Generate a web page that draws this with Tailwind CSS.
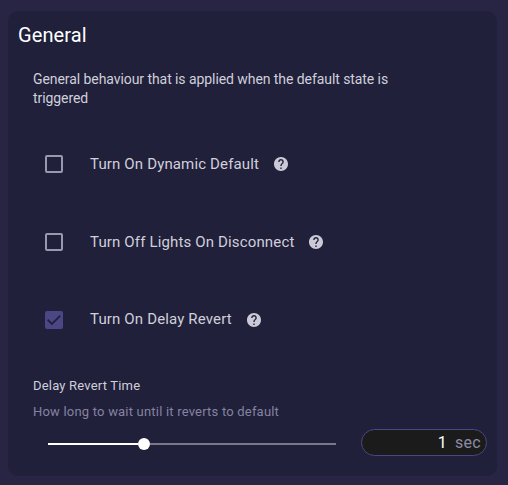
<!DOCTYPE html>
<html lang="en">
<head>
    <meta charset="UTF-8">
    <meta name="viewport" content="width=device-width, initial-scale=1.0">
    <title>General</title>
    <script src="https://cdn.jsdelivr.net/npm/@tailwindcss/browser@4"></script>
</head>
<body class="bg-[#272543] h-screen overflow-hidden font-['Roboto',sans-serif] text-[#d0cfdb]">
    <div class="ml-2 mt-[11px] w-[489px] h-[465px] rounded-[10px] bg-[#20203a] pt-2.5 pl-[10px] pr-[10px]">
        <h1 class="text-[20px] leading-[28px] tracking-[0.1px] text-white">General</h1>

        <div class="pl-[15px]">
            <p class="mt-[21px] w-[380px] text-[14px] leading-[19px] tracking-[-0.07px]">General behaviour that is applied when the default state is triggered</p>

            <!-- Options -->
            <div class="mt-[26px] flex flex-col">
                <div class="flex items-center h-[78px] pl-3 -mt-[9px]">
                    <span class="size-[18px] rounded-[2px] border-2 border-[#9b98ae]"></span>
                    <span class="ml-[27px] text-[15px] tracking-[0.15px]">Turn On Dynamic Default</span>
                    <svg class="ml-[14px] size-4" viewBox="0.6 0.6 22.8 22.8" fill="#cbc9d8"><path d="M12 2C6.48 2 2 6.48 2 12s4.480 10 10 10 10-4.480 10-10S17.520 2 12 2zm1 17h-2v-2h2v2zm2.070-7.750-.9.920C13.450 12.900 13 13.500 13 15h-2v-.5c0-1.100.45-2.100 1.170-2.830l1.240-1.260c.37-.36.59-.86.59-1.410 0-1.100-.9-2-2-2s-2 .9-2 2H8c0-2.210 1.790-4 4-4s4 1.790 4 4c0 .88-.36 1.680-.93 2.250z" stroke="none"/></svg>
                </div>
                <div class="flex items-center h-[78px] pl-3">
                    <span class="size-[18px] rounded-[2px] border-2 border-[#9b98ae]"></span>
                    <span class="ml-[27px] text-[15px] tracking-[0.15px]">Turn Off Lights On Disconnect</span>
                    <svg class="ml-[14px] size-4" viewBox="0.6 0.6 22.8 22.8" fill="#cbc9d8"><path d="M12 2C6.48 2 2 6.48 2 12s4.480 10 10 10 10-4.480 10-10S17.520 2 12 2zm1 17h-2v-2h2v2zm2.070-7.750-.9.920C13.450 12.900 13 13.500 13 15h-2v-.5c0-1.100.45-2.100 1.170-2.830l1.240-1.260c.37-.36.59-.86.59-1.410 0-1.100-.9-2-2-2s-2 .9-2 2H8c0-2.210 1.790-4 4-4s4 1.790 4 4c0 .88-.36 1.680-.93 2.250z" stroke="none"/></svg>
                </div>
                <div class="flex items-center h-[78px] pl-3">
                    <span class="size-[18px] rounded-[2px] bg-[#4a4784]">
                        <svg class="size-[18px]" viewBox="0 0 18 18" fill="none" stroke="#20203a" stroke-width="1.8"><path d="M2.600 8.700 6.900 13 15.300 4.600"/></svg>
                    </span>
                    <span class="ml-[27px] mb-0.5 text-[15px] tracking-[0.15px]">Turn On Delay Revert</span>
                    <svg class="ml-[14px] size-4" viewBox="0.6 0.6 22.8 22.8" fill="#cbc9d8"><path d="M12 2C6.48 2 2 6.48 2 12s4.480 10 10 10 10-4.480 10-10S17.520 2 12 2zm1 17h-2v-2h2v2zm2.070-7.750-.9.920C13.450 12.900 13 13.500 13 15h-2v-.5c0-1.100.45-2.100 1.170-2.830l1.240-1.260c.37-.36.59-.86.59-1.410 0-1.100-.9-2-2-2s-2 .9-2 2H8c0-2.210 1.790-4 4-4s4 1.790 4 4c0 .88-.36 1.680-.93 2.250z" stroke="none"/></svg>
                </div>
            </div>

            <!-- Delay slider -->
            <h2 class="mt-[17px] text-[13px] leading-5 tracking-[0.19px]">Delay Revert Time</h2>
            <p class="mt-1.5 text-[13px] leading-5 tracking-[0.2px] text-[#8583a0]">How long to wait until it reverts to default</p>
            <div class="mt-[7px] flex items-center">
                <div class="ml-[15px] mt-[3px] flex items-center w-[288px]">
                    <div class="h-0.5 w-[90px] bg-white"></div>
                    <div class="size-3 rounded-full bg-white"></div>
                    <div class="h-0.5 flex-1 bg-[#797889]"></div>
                </div>
                <div class="ml-[25px] flex items-center justify-end w-[126px] h-[27px] shrink-0 rounded-full border border-[#4a4784] bg-[#1b1b1b] pr-[5px] text-[16px] tracking-[0.3px]">
                    <span class="text-white">1</span>
                    <span class="ml-2 text-[#8d8ba6]">sec</span>
                </div>
            </div>
        </div>
    </div>
</body>
</html>
